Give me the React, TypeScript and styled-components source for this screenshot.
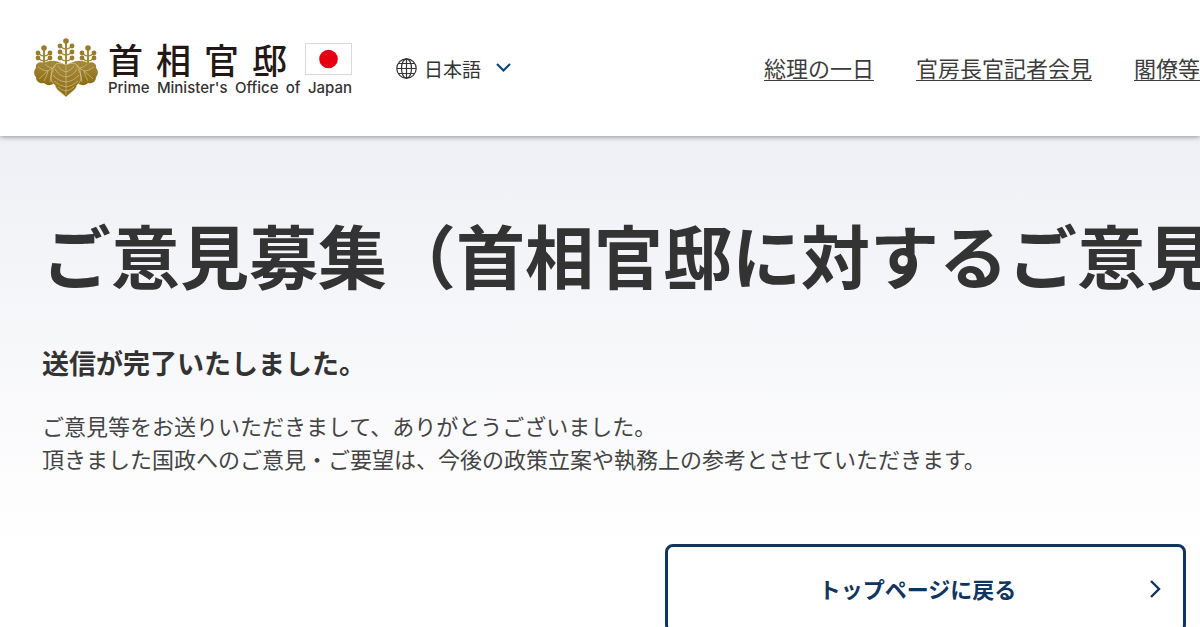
import React from "react";
import styled, { createGlobalStyle } from "styled-components";

const GlobalStyle = createGlobalStyle`
  *, *::before, *::after { box-sizing: border-box; }
  body {
    margin: 0;
    background: #fff;
    color: #333;
    font-family: "Noto Sans CJK JP", sans-serif;
    font-size: 22px;
    line-height: 33px;
    overflow-x: hidden;
  }
`;

const Header = styled.header`
  position: relative;
  display: flex;
  align-items: center;
  height: 136px;
  padding-left: 34px;
  background: #fff;
  box-shadow: 0 1px 5px rgba(0, 0, 0, 0.4);
`;

const Brand = styled.a`
  display: flex;
  align-items: center;
  gap: 10px;
  color: #231815;
  text-decoration: none;
`;

const Wordmark = styled.span`
  display: flex;
  flex-direction: column;
  gap: 2px;
  padding-top: 2px;
`;

const NameRow = styled.span`
  display: flex;
  align-items: center;
  gap: 18px;
`;

const JapaneseName = styled.span`
  display: flex;
  gap: 13px;
  font-size: 35px;
  font-weight: 500;
  line-height: 36px;
`;

const EnglishName = styled.span`
  display: flex;
  justify-content: space-between;
  color: #333;
  font-family: Inter, sans-serif;
  font-size: 15px;
  font-weight: 500;
  line-height: 18px;
  white-space: nowrap;
`;

const LanguageButton = styled.button`
  display: flex;
  align-items: center;
  gap: 7px;
  margin: 0 0 0 44px;
  padding: 0;
  border: 0;
  background: none;
  color: #333;
  font: inherit;
  font-size: 19px;
  white-space: nowrap;
`;

const LanguageName = styled.span`
  padding-right: 8px;
`;

const Nav = styled.nav`
  display: flex;
  flex-shrink: 0;
  gap: 42px;
  margin-left: auto;
  padding-bottom: 2px;
`;

const NavLink = styled.a`
  color: #3c3c3c;
  text-decoration: underline;
  text-decoration-thickness: 1px;
  text-underline-offset: 3px;
  white-space: nowrap;
`;

const Main = styled.main`
  padding: 68px 14px 42px 42px;
  background: linear-gradient(#eff0f5 0, #fff 420px);
`;

const Title = styled.h1`
  margin: 0;
  font-size: 69px;
  font-weight: 700;
  line-height: 100px;
  white-space: nowrap;
`;

const Subtitle = styled.h2`
  margin: 38px 0 25px;
  font-size: 27px;
  font-weight: 700;
  line-height: 42px;
`;

const Message = styled.p`
  margin: 0;
  color: #444;
`;

const Actions = styled.div`
  display: flex;
  justify-content: flex-end;
  margin-top: 69px;
`;

const BackLink = styled.a`
  display: grid;
  grid-template-columns: 1fr 16px;
  align-items: center;
  width: 521px;
  padding: 25px 19px;
  border: 3px solid #0f3560;
  border-radius: 8px;
  background: #fff;
  color: #0f3560;
  font-weight: 700;
  text-align: center;
  text-decoration: none;
`;

const Spike = ({ x, top, spread, rows }: { x: number; top: number; spread: number; rows: number[] }) => (
  <g>
    <path d={`M${x} ${top}V28`} stroke="#a48a35" strokeWidth="2" />
    <circle cx={x} cy={top} r="2.8" />
    {rows.map((y) => (
      <g key={y}>
        <path
          d={`M${x - spread} ${y}Q${x - 3} ${y + 3} ${x} ${y + 3}Q${x + 3} ${y + 3} ${x + spread} ${y}`}
          fill="none"
          stroke="#a48a35"
          strokeWidth="1.4"
        />
        <circle cx={x - spread} cy={y} r="2.4" />
        <circle cx={x + spread} cy={y} r="2.4" />
      </g>
    ))}
  </g>
);

const Emblem = () => (
  <svg width="64" height="60" viewBox="0 0 64 60" fill="#9a7d2c" aria-hidden="true">
    <defs>
      <linearGradient id="leaf" x1="0" y1="0" x2="0" y2="1">
        <stop offset="0" stopColor="#a68a3e" />
        <stop offset="1" stopColor="#8c6b12" />
      </linearGradient>
    </defs>
    <Spike x={32} top={3} spread={6} rows={[8, 14, 20]} />
    <Spike x={10} top={10} spread={6} rows={[15, 20]} />
    <Spike x={54} top={10} spread={6} rows={[15, 20]} />
    <g fill="url(#leaf)">
      <path d="M10 25C6 23 1 25 2 30C-1 33 0 37 2 39C2 44 6 46 10 45C14 49 20 47 24 42L31 27C25 23 17 21 10 25Z" />
      <path d="M54 25C58 23 63 25 62 30C65 33 64 37 62 39C62 44 58 46 54 45C50 49 44 47 40 42L33 27C39 23 47 21 54 25Z" />
      <path d="M32 27C25 23 18 26 19 33C15 38 17 44 21 47C22 52 27 54 32 59C37 54 42 52 43 47C47 44 49 38 45 33C46 26 39 23 32 27Z" stroke="#e2d6a6" strokeWidth="0.6" />
    </g>
    <g fill="none" stroke="#dccd94" strokeWidth="0.6">
      <path d="M32 28V57M32 34Q27 33 24 28M32 34Q37 33 40 28M32 39Q25 38 21 31M32 39Q39 38 43 31M32 44Q24 43 19 37M32 44Q40 43 45 37M32 49Q25 48 20 43M32 49Q39 48 44 43M32 53Q27 52 24 49M32 53Q37 52 40 49" />
      <path d="M22 28Q13 32 5 41M18 30Q13 29 11 26M14 33Q9 33 4 29M18 30Q18 37 16 44M14 33Q13 38 10 43" />
      <path d="M42 28Q51 32 59 41M46 30Q51 29 53 26M50 33Q55 33 60 29M46 30Q46 37 48 44M50 33Q51 38 54 43" />
    </g>
  </svg>
);

const Flag = () => (
  <svg width="47" height="32" viewBox="0 0 47 32" aria-hidden="true">
    <rect x="0.5" y="0.5" width="46" height="31" fill="#fff" stroke="#d9d9d9" />
    <circle cx="23.5" cy="16" r="9.3" fill="#e60012" />
  </svg>
);

const Globe = () => (
  <svg width="21" height="21" viewBox="0 0 21 21" fill="none" stroke="#333" strokeWidth="1.2" aria-hidden="true">
    <circle cx="10.5" cy="10.5" r="9.7" />
    <ellipse cx="10.5" cy="10.5" rx="5" ry="9.7" />
    <path d="M10.5 1V20M2.5 5.5H18.5M1 10.5H20M2.5 15.5H18.5" />
  </svg>
);

const ChevronDown = () => (
  <svg width="15" height="10" viewBox="0 0 15 10" fill="none" stroke="#0f4576" strokeWidth="2.2" aria-hidden="true">
    <path d="M1 1L7.5 7.5L14 1" />
  </svg>
);

const ChevronRight = () => (
  <svg width="16" height="18" viewBox="0 0 16 18" fill="none" stroke="#0f3560" strokeWidth="2.4" aria-hidden="true">
    <path d="M3 1L11 9L3 17" />
  </svg>
);

const navItems = ["総理の一日", "官房長官記者会見", "閣僚等"];

export default function App() {
  return (
    <>
      <GlobalStyle />
      <Header>
        <Brand href="#">
          <Emblem />
          <Wordmark>
            <NameRow>
              <JapaneseName>
                {[..."首相官邸"].map((character) => (
                  <span key={character}>{character}</span>
                ))}
              </JapaneseName>
              <Flag />
            </NameRow>
            <EnglishName>
              {"Prime Minister's Office of Japan".split(" ").map((word) => (
                <span key={word}>{word}</span>
              ))}
            </EnglishName>
          </Wordmark>
        </Brand>
        <LanguageButton type="button">
          <Globe />
          <LanguageName>日本語</LanguageName>
          <ChevronDown />
        </LanguageButton>
        <Nav>
          {navItems.map((item) => (
            <NavLink href="#" key={item}>
              {item}
            </NavLink>
          ))}
        </Nav>
      </Header>
      <Main>
        <Title>ご意見募集（首相官邸に対するご意見</Title>
        <Subtitle>送信が完了いたしました。</Subtitle>
        <Message>
          ご意見等をお送りいただきまして、ありがとうございました。
          <br />
          頂きました国政へのご意見・ご要望は、今後の政策立案や執務上の参考とさせていただきます。
        </Message>
        <Actions>
          <BackLink href="#">
            トップページに戻る
            <ChevronRight />
          </BackLink>
        </Actions>
      </Main>
    </>
  );
}
